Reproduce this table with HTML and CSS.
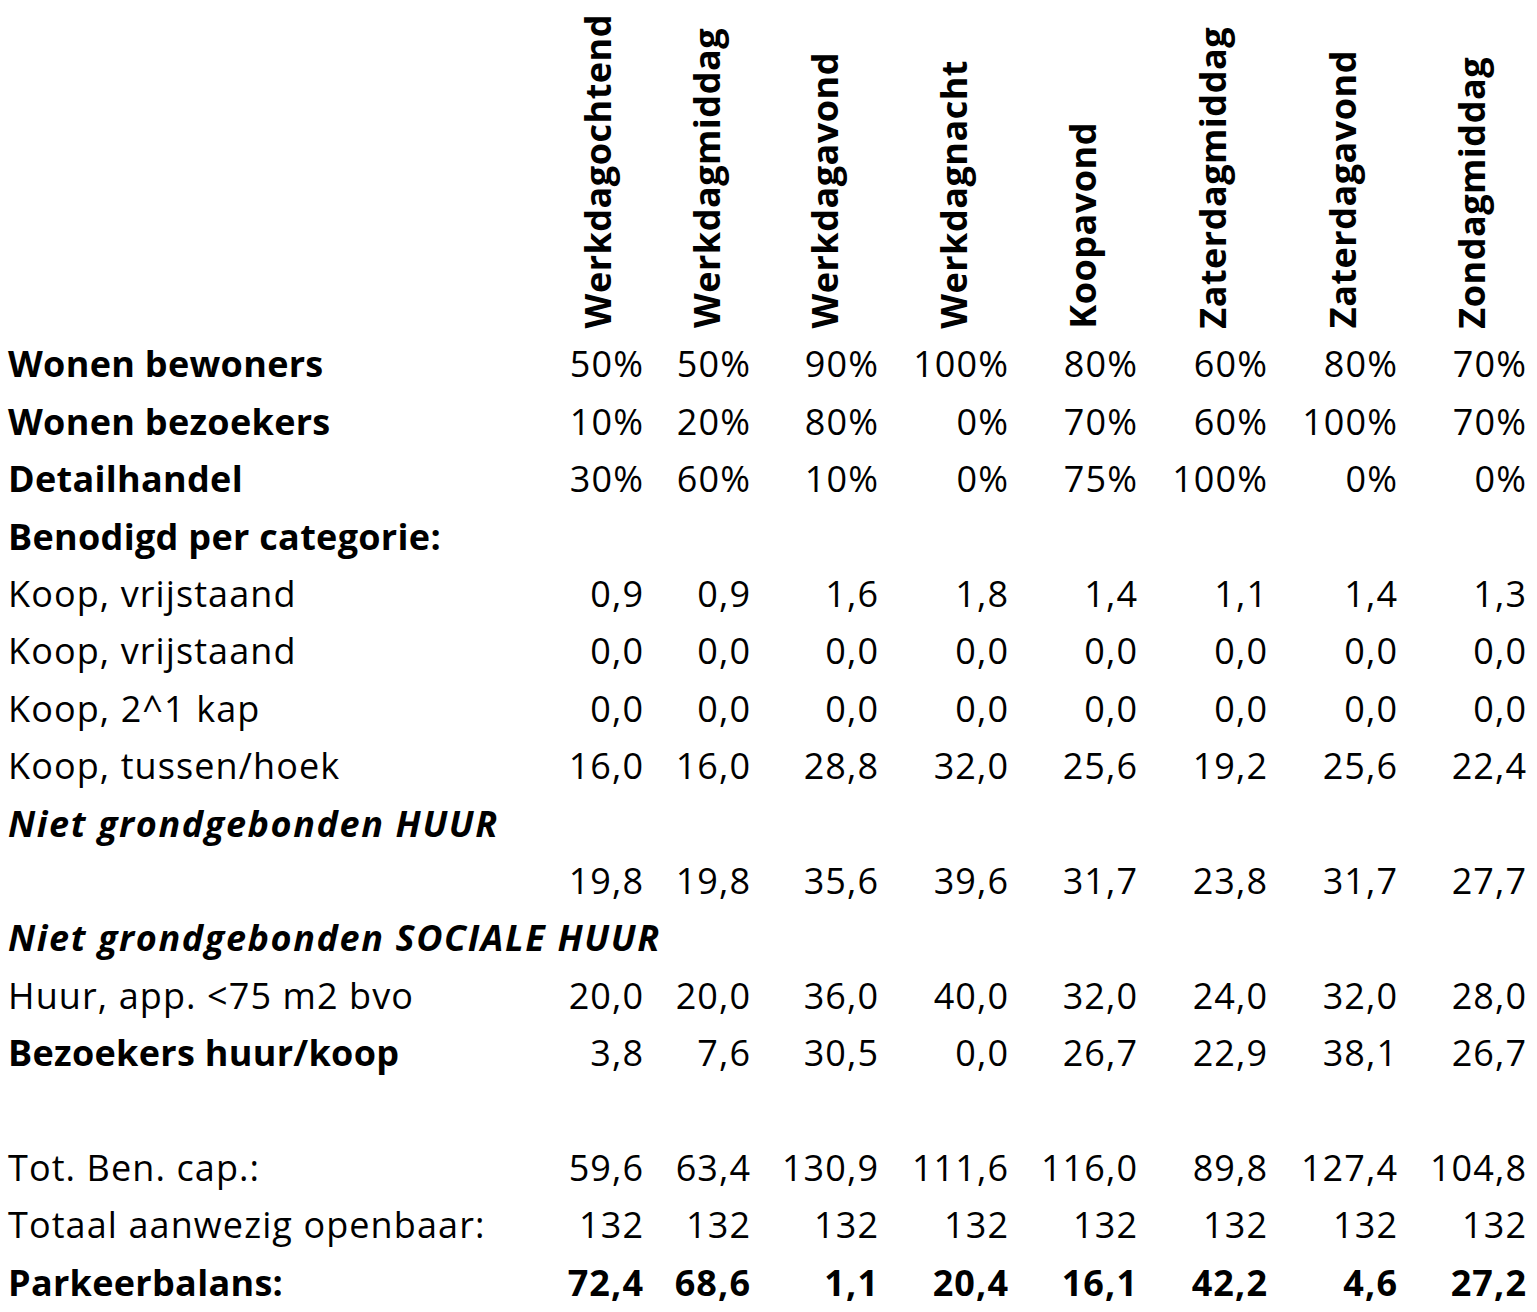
FILE: index.html
```html
<!DOCTYPE html>
<html>
<head>
<meta charset="utf-8">
<link rel="stylesheet" href="styles.css">
</head>
<body>
<div class="sheet">
  <div class="row head">
    <div class="cell"></div>
    <div class="cell hc first"><span class="vt">Werkdagochtend</span></div>
    <div class="cell hc"><span class="vt">Werkdagmiddag</span></div>
    <div class="cell hc"><span class="vt">Werkdagavond</span></div>
    <div class="cell hc"><span class="vt">Werkdagnacht</span></div>
    <div class="cell hc"><span class="vt">Koopavond</span></div>
    <div class="cell hc"><span class="vt">Zaterdagmiddag</span></div>
    <div class="cell hc"><span class="vt">Zaterdagavond</span></div>
    <div class="cell hc"><span class="vt">Zondagmiddag</span></div>
  </div>
  <div class="row"><div class="lbl b">Wonen bewoners</div><div class="n">50%</div><div class="n">50%</div><div class="n">90%</div><div class="n">100%</div><div class="n">80%</div><div class="n">60%</div><div class="n">80%</div><div class="n">70%</div></div>
  <div class="row"><div class="lbl b">Wonen bezoekers</div><div class="n">10%</div><div class="n">20%</div><div class="n">80%</div><div class="n">0%</div><div class="n">70%</div><div class="n">60%</div><div class="n">100%</div><div class="n">70%</div></div>
  <div class="row"><div class="lbl b">Detailhandel</div><div class="n">30%</div><div class="n">60%</div><div class="n">10%</div><div class="n">0%</div><div class="n">75%</div><div class="n">100%</div><div class="n">0%</div><div class="n">0%</div></div>
  <div class="row"><div class="lbl b">Benodigd per categorie:</div></div>
  <div class="row"><div class="lbl">Koop, vrijstaand</div><div class="n">0,9</div><div class="n">0,9</div><div class="n">1,6</div><div class="n">1,8</div><div class="n">1,4</div><div class="n">1,1</div><div class="n">1,4</div><div class="n">1,3</div></div>
  <div class="row"><div class="lbl">Koop, vrijstaand</div><div class="n">0,0</div><div class="n">0,0</div><div class="n">0,0</div><div class="n">0,0</div><div class="n">0,0</div><div class="n">0,0</div><div class="n">0,0</div><div class="n">0,0</div></div>
  <div class="row"><div class="lbl">Koop, 2^1 kap</div><div class="n">0,0</div><div class="n">0,0</div><div class="n">0,0</div><div class="n">0,0</div><div class="n">0,0</div><div class="n">0,0</div><div class="n">0,0</div><div class="n">0,0</div></div>
  <div class="row"><div class="lbl">Koop, tussen/hoek</div><div class="n">16,0</div><div class="n">16,0</div><div class="n">28,8</div><div class="n">32,0</div><div class="n">25,6</div><div class="n">19,2</div><div class="n">25,6</div><div class="n">22,4</div></div>
  <div class="row"><div class="lbl b i">Niet grondgebonden HUUR</div></div>
  <div class="row"><div class="lbl"></div><div class="n">19,8</div><div class="n">19,8</div><div class="n">35,6</div><div class="n">39,6</div><div class="n">31,7</div><div class="n">23,8</div><div class="n">31,7</div><div class="n">27,7</div></div>
  <div class="row"><div class="lbl b i">Niet grondgebonden SOCIALE HUUR</div></div>
  <div class="row"><div class="lbl">Huur, app. &lt;75 m2 bvo</div><div class="n">20,0</div><div class="n">20,0</div><div class="n">36,0</div><div class="n">40,0</div><div class="n">32,0</div><div class="n">24,0</div><div class="n">32,0</div><div class="n">28,0</div></div>
  <div class="row"><div class="lbl b">Bezoekers huur/koop</div><div class="n">3,8</div><div class="n">7,6</div><div class="n">30,5</div><div class="n">0,0</div><div class="n">26,7</div><div class="n">22,9</div><div class="n">38,1</div><div class="n">26,7</div></div>
  <div class="row"></div>
  <div class="row"><div class="lbl">Tot. Ben. cap.:</div><div class="n">59,6</div><div class="n">63,4</div><div class="n">130,9</div><div class="n">111,6</div><div class="n">116,0</div><div class="n">89,8</div><div class="n">127,4</div><div class="n">104,8</div></div>
  <div class="row"><div class="lbl">Totaal aanwezig openbaar:</div><div class="n">132</div><div class="n">132</div><div class="n">132</div><div class="n">132</div><div class="n">132</div><div class="n">132</div><div class="n">132</div><div class="n">132</div></div>
  <div class="row bold"><div class="lbl b">Parkeerbalans:</div><div class="n">72,4</div><div class="n">68,6</div><div class="n">1,1</div><div class="n">20,4</div><div class="n">16,1</div><div class="n">42,2</div><div class="n">4,6</div><div class="n">27,2</div></div>
</div>
</body>
</html>
```
FILE: styles.css
```css
html, body {
  margin: 0;
  padding: 0;
  background: #ffffff;
}
body {
  font-family: "Open Sans", Lato, "Liberation Sans", sans-serif;
  font-size: 36px;
  color: #000000;
}
.sheet {
  padding-left: 8px;
  width: 1529px;
}
.row {
  display: grid;
  grid-template-columns: 532px 103px 107px 128px 130px 129px 130px 130px 129px;
  height: 57.4px;
  line-height: 57.4px;
}
.row.head {
  height: 335.4px;
  line-height: normal;
}
.hc {
  display: flex;
  align-items: flex-end;
  justify-content: center;
  padding-left: 20px;
  padding-bottom: 7px;
}
.hc.first {
  padding-left: 12px;
}
.vt {
  writing-mode: vertical-rl;
  transform: rotate(180deg);
  font-weight: 700;
  letter-spacing: 0.5px;
  white-space: nowrap;
}
.lbl {
  white-space: nowrap;
  overflow: visible;
  letter-spacing: 1.1px;
}
.b {
  font-weight: 700;
  letter-spacing: 0.3px;
}
.b.i {
  font-style: italic;
  letter-spacing: 1.6px;
}
.n {
  text-align: right;
  white-space: nowrap;
  letter-spacing: 1.1px;
  margin-right: -1.1px;
}
.bold .n {
  font-weight: 700;
}
```
